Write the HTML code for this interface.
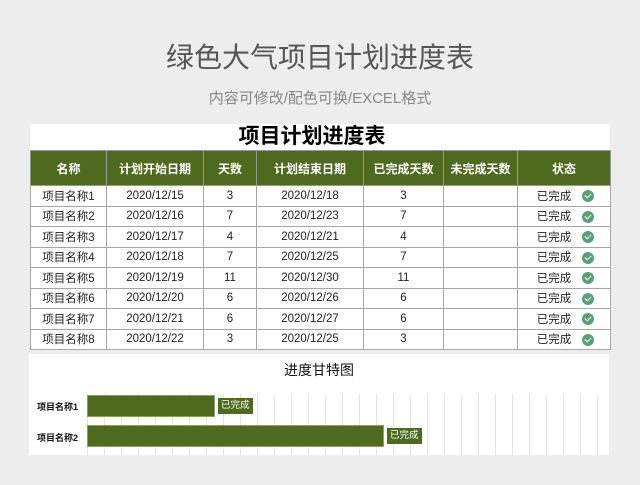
<!DOCTYPE html>
<html><head><meta charset="utf-8"><style>
*{margin:0;padding:0;box-sizing:border-box}
body{width:640px;height:485px;background:#ededed;font-family:"Liberation Sans","Noto Sans CJK SC",sans-serif;position:relative;overflow:hidden}
.t1{position:absolute;top:36px;left:0;width:640px;text-align:center;font-size:28px;color:#555}
.t2{position:absolute;top:87px;left:0;width:640px;text-align:center;font-size:15px;color:#888}
.band{position:absolute;left:30px;top:124px;width:580px;height:26px;background:#fff;text-align:center;font-size:21px;font-weight:bold;line-height:26px;color:#000;padding-right:16px}
table{position:absolute;left:30px;top:150px;border-collapse:collapse;background:#fff}
td,th{border:1px solid #a6a6a6;text-align:center;font-size:11.5px;color:#222;height:20.5px;padding:0}
th{background:#4e6a1f;color:#fff;height:35px;font-size:12px;font-weight:bold;border-color:#999}
.ok{position:relative}
.ok span{position:relative;left:-10px}
.ok i{position:absolute;right:16px;top:4px;width:12px;height:12px;border-radius:50%;background:#5a9e7c}
.ok i:after{content:"";position:absolute;left:3px;top:3px;width:5px;height:3px;border-left:1.5px solid #fff;border-bottom:1.5px solid #fff;transform:rotate(-45deg)}
.chart{position:absolute;left:29px;top:354px;width:580px;height:101px;background:#fff}
.ct{position:absolute;top:6px;left:0;width:100%;text-align:center;font-size:14px;color:#111}
.grid{position:absolute;left:58px;top:40px;width:515px;height:61px;background:repeating-linear-gradient(90deg,#e3e3e3 0 1px,transparent 1px 17px)}
.bar{position:absolute;background:#4e6a1f;border:1px solid #8aa060}
.lbl{position:absolute;background:#4e6a1f;color:#fff;font-size:9.5px;line-height:16px;padding:0 3px}
.nm{position:absolute;left:8px;font-size:9px;font-weight:bold;color:#111}
</style></head><body>
<div class="t1">绿色大气项目计划进度表</div>
<div class="t2">内容可修改/配色可换/EXCEL格式</div>
<div class="band">项目计划进度表</div>
<table>
<tr><th style="width:76px">名称</th><th style="width:97px">计划开始日期</th><th style="width:53px">天数</th><th style="width:107px">计划结束日期</th><th style="width:80px">已完成天数</th><th style="width:74px">未完成天数</th><th style="width:93px">状态</th></tr>
<tr><td>项目名称1</td><td>2020/12/15</td><td>3</td><td>2020/12/18</td><td>3</td><td></td><td class="ok"><span>已完成</span><i></i></td></tr>
<tr><td>项目名称2</td><td>2020/12/16</td><td>7</td><td>2020/12/23</td><td>7</td><td></td><td class="ok"><span>已完成</span><i></i></td></tr>
<tr><td>项目名称3</td><td>2020/12/17</td><td>4</td><td>2020/12/21</td><td>4</td><td></td><td class="ok"><span>已完成</span><i></i></td></tr>
<tr><td>项目名称4</td><td>2020/12/18</td><td>7</td><td>2020/12/25</td><td>7</td><td></td><td class="ok"><span>已完成</span><i></i></td></tr>
<tr><td>项目名称5</td><td>2020/12/19</td><td>11</td><td>2020/12/30</td><td>11</td><td></td><td class="ok"><span>已完成</span><i></i></td></tr>
<tr><td>项目名称6</td><td>2020/12/20</td><td>6</td><td>2020/12/26</td><td>6</td><td></td><td class="ok"><span>已完成</span><i></i></td></tr>
<tr><td>项目名称7</td><td>2020/12/21</td><td>6</td><td>2020/12/27</td><td>6</td><td></td><td class="ok"><span>已完成</span><i></i></td></tr>
<tr><td>项目名称8</td><td>2020/12/22</td><td>3</td><td>2020/12/25</td><td>3</td><td></td><td class="ok"><span>已完成</span><i></i></td></tr>
</table>
<div class="chart">
<div class="ct">进度甘特图</div>
<div class="grid"></div>
<div class="nm" style="top:46px">项目名称1</div>
<div class="nm" style="top:77px">项目名称2</div>
<div class="bar" style="left:58px;top:41px;width:128px;height:22px"></div>
<div class="lbl" style="left:189px;top:44px">已完成</div>
<div class="bar" style="left:58px;top:71px;width:297px;height:22px"></div>
<div class="lbl" style="left:358px;top:74px">已完成</div>
</div>
</body></html>
